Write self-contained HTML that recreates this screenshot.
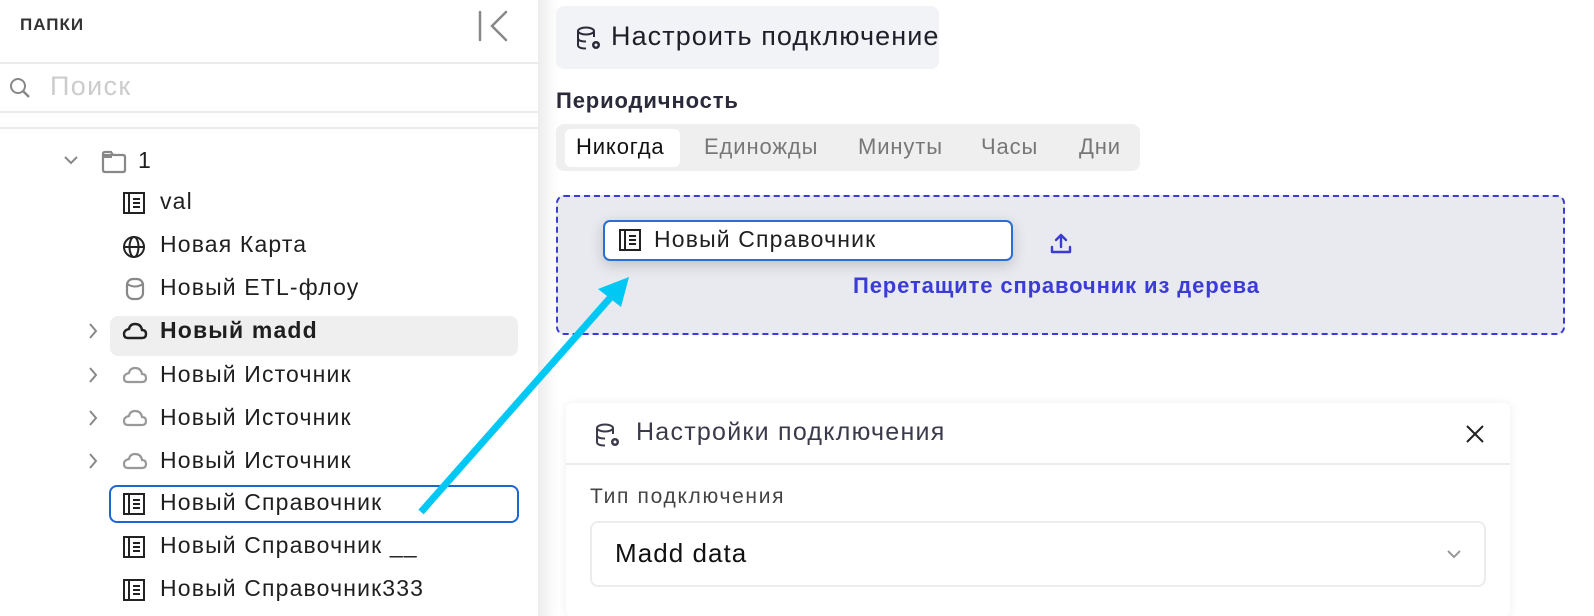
<!DOCTYPE html>
<html><head><meta charset="utf-8"><style>
*{box-sizing:border-box;margin:0;padding:0}
body{width:1594px;height:616px;overflow:hidden;background:#fff;font-family:"Liberation Sans","Noto Sans CJK SC",sans-serif;position:relative;color:#1f1f1f}
.a{position:absolute;white-space:nowrap;letter-spacing:.05em}
.row{position:absolute;left:160px;font-size:23px;line-height:26px;color:#1f1f1f;white-space:nowrap;letter-spacing:.05em}
svg{position:absolute;overflow:visible}
</style></head><body>
<div class="a" style="left:538px;top:0;width:22px;height:616px;background:linear-gradient(90deg,#ececec,#fafafa 60%,#fff)"></div>
<div class="a" style="left:20px;top:15px;font-size:17px;font-weight:bold;color:#333;letter-spacing:1px">ПАПКИ</div>
<svg style="left:478px;top:10px" width="32" height="32"><path d="M2 2V30M28 2L14 16L28 30" stroke="#888" stroke-width="2.5" fill="none" stroke-linecap="round"/></svg>
<div class="a" style="left:0;top:62px;width:538px;height:2px;background:#ebebeb"></div>
<svg style="left:8px;top:76px" width="24" height="24"><circle cx="10" cy="10" r="7" stroke="#888" stroke-width="2" fill="none"/><path d="M15 15L21 21" stroke="#888" stroke-width="2.5"/></svg>
<div class="a" style="left:50px;top:71px;font-size:27px;color:#ccc">Поиск</div>
<div class="a" style="left:0;top:111px;width:538px;height:2px;background:#ebebeb"></div>
<div class="a" style="left:0;top:127px;width:538px;height:2px;background:#ebebeb"></div>
<svg style="left:63px;top:155px" width="16" height="10"><path d="M2 2L8 8L14 2" stroke="#888" stroke-width="2" fill="none"/></svg>
<svg style="left:101px;top:150px" width="26" height="24"><path d="M2 4Q2 2 4 2H10L12 5H22Q24 5 24 7V20Q24 22 22 22H4Q2 22 2 20Z" stroke="#888" stroke-width="2.2" fill="none"/><path d="M2 4H11V8H2Z" fill="#888"/></svg>
<div class="row" style="left:138px;top:147px">1</div>
<svg style="left:123px;top:192px" width="22" height="22"><rect x="1" y="1" width="20" height="20" stroke="#222" stroke-width="2" fill="none"/><path d="M6 1V21M10 7H17M10 11H17M10 15H17" stroke="#222" stroke-width="2"/></svg>
<div class="row" style="top:188px">val</div>
<svg style="left:122px;top:235px" width="24" height="24"><circle cx="12" cy="12" r="10" stroke="#222" stroke-width="2" fill="none"/><ellipse cx="12" cy="12" rx="4.5" ry="10" stroke="#222" stroke-width="2" fill="none"/><path d="M2 12H22" stroke="#222" stroke-width="2"/></svg>
<div class="row" style="top:231px">Новая Карта</div>
<svg style="left:125px;top:277px" width="20" height="24"><rect x="2" y="2" width="16" height="20" rx="6" stroke="#888" stroke-width="2.2" fill="none"/><path d="M2 7Q10 12 18 7" stroke="#888" stroke-width="2" fill="none"/></svg>
<div class="row" style="top:274px">Новый ETL-флоу</div>
<div class="a" style="left:110px;top:316px;width:408px;height:40px;background:#efefef;border-radius:8px"></div>
<svg style="left:87px;top:322px" width="12" height="18"><path d="M3 2L9 9L3 16" stroke="#888" stroke-width="2" fill="none"/></svg>
<svg style="left:123px;top:322px" width="24" height="18"><path d="M5 16H19Q23 16 23 12Q23 8 19 8Q18 2 12 2Q7 2 6 7Q1 8 1 12Q1 16 5 16Z" stroke="#222" stroke-width="2.4" fill="none"/></svg>
<div class="row" style="top:317px;font-weight:bold">Новый madd</div>
<svg style="left:87px;top:366px" width="12" height="18"><path d="M3 2L9 9L3 16" stroke="#888" stroke-width="2" fill="none"/></svg>
<svg style="left:123px;top:366px" width="24" height="18"><path d="M5 16H19Q23 16 23 12Q23 8 19 8Q18 2 12 2Q7 2 6 7Q1 8 1 12Q1 16 5 16Z" stroke="#999" stroke-width="2.2" fill="none"/></svg>
<div class="row" style="top:361px">Новый Источник</div>
<svg style="left:87px;top:409px" width="12" height="18"><path d="M3 2L9 9L3 16" stroke="#888" stroke-width="2" fill="none"/></svg>
<svg style="left:123px;top:409px" width="24" height="18"><path d="M5 16H19Q23 16 23 12Q23 8 19 8Q18 2 12 2Q7 2 6 7Q1 8 1 12Q1 16 5 16Z" stroke="#999" stroke-width="2.2" fill="none"/></svg>
<div class="row" style="top:404px">Новый Источник</div>
<svg style="left:87px;top:452px" width="12" height="18"><path d="M3 2L9 9L3 16" stroke="#888" stroke-width="2" fill="none"/></svg>
<svg style="left:123px;top:452px" width="24" height="18"><path d="M5 16H19Q23 16 23 12Q23 8 19 8Q18 2 12 2Q7 2 6 7Q1 8 1 12Q1 16 5 16Z" stroke="#999" stroke-width="2.2" fill="none"/></svg>
<div class="row" style="top:447px">Новый Источник</div>
<div class="a" style="left:109px;top:485px;width:410px;height:38px;border:2px solid #1a66d2;border-radius:8px"></div>
<svg style="left:123px;top:493px" width="22" height="22"><rect x="1" y="1" width="20" height="20" stroke="#222" stroke-width="2" fill="none"/><path d="M6 1V21M10 7H17M10 11H17M10 15H17" stroke="#222" stroke-width="2"/></svg>
<div class="row" style="top:489px">Новый Справочник</div>
<svg style="left:123px;top:536px" width="22" height="22"><rect x="1" y="1" width="20" height="20" stroke="#222" stroke-width="2" fill="none"/><path d="M6 1V21M10 7H17M10 11H17M10 15H17" stroke="#222" stroke-width="2"/></svg>
<div class="row" style="top:532px">Новый Справочник __</div>
<svg style="left:123px;top:579px" width="22" height="22"><rect x="1" y="1" width="20" height="20" stroke="#222" stroke-width="2" fill="none"/><path d="M6 1V21M10 7H17M10 11H17M10 15H17" stroke="#222" stroke-width="2"/></svg>
<div class="row" style="top:575px">Новый Справочник333</div>

<!-- right -->
<div class="a" style="left:556px;top:6px;width:383px;height:63px;background:#f2f3f6;border-radius:8px"></div>
<svg style="left:576px;top:26px" width="28" height="26"><ellipse cx="10" cy="5" rx="8" ry="3.5" stroke="#2a2a3a" stroke-width="2" fill="none"/><path d="M2 5V19Q2 22.5 10 22.5M18 5V11M2 12Q2 15.5 10 15.5" stroke="#2a2a3a" stroke-width="2" fill="none"/><circle cx="20" cy="19" r="4" fill="#2a2a3a"/><circle cx="20" cy="19" r="1.5" fill="#f2f3f6"/></svg>
<div class="a" style="left:611px;top:21px;font-size:27px;color:#1f1f2a;letter-spacing:.04em">Настроить подключение</div>
<div class="a" style="left:556px;top:88px;font-size:22px;font-weight:bold;color:#2a2a3a;letter-spacing:.04em">Периодичность</div>
<div class="a" style="left:556px;top:124px;width:584px;height:47px;background:#efefef;border-radius:8px"></div>
<div class="a" style="left:565px;top:129px;width:115px;height:38px;background:#fff;border-radius:6px"></div>
<div class="a" style="left:576px;top:134px;font-size:22px;color:#111;letter-spacing:.04em">Никогда</div>
<div class="a" style="left:704px;top:134px;font-size:22px;color:#777;letter-spacing:.04em">Единожды</div>
<div class="a" style="left:858px;top:134px;font-size:22px;color:#777;letter-spacing:.04em">Минуты</div>
<div class="a" style="left:981px;top:134px;font-size:22px;color:#777;letter-spacing:.04em">Часы</div>
<div class="a" style="left:1079px;top:134px;font-size:22px;color:#777;letter-spacing:.04em">Дни</div>
<div class="a" style="left:556px;top:195px;width:1009px;height:140px;background:#e8eaef;border:2px dashed #3b3bd6;border-radius:8px"></div>
<div class="a" style="left:603px;top:220px;width:410px;height:41px;background:#fff;border:2px solid #2a6fd6;border-radius:7px;box-shadow:0 4px 14px rgba(0,0,0,.18)"></div>
<svg style="left:619px;top:229px" width="22" height="22"><rect x="1" y="1" width="20" height="20" stroke="#222" stroke-width="2" fill="none"/><path d="M6 1V21M10 7H17M10 11H17M10 15H17" stroke="#222" stroke-width="2"/></svg>
<div class="a" style="left:654px;top:226px;font-size:23px;color:#1f1f1f">Новый Справочник</div>
<svg style="left:1050px;top:232px" width="22" height="22"><path d="M11 3V15M6 8L11 3L16 8M2 15V20H20V15" stroke="#3b3bd6" stroke-width="2.4" fill="none" stroke-linecap="round" stroke-linejoin="round"/></svg>
<div class="a" style="left:853px;top:273px;font-size:22px;font-weight:bold;color:#3b3bd6;letter-spacing:.04em">Перетащите справочник из дерева</div>

<div class="a" style="left:566px;top:403px;width:944px;height:213px;background:#fff;border-radius:6px;box-shadow:0 0 10px rgba(0,0,0,.07)"></div>
<div class="a" style="left:566px;top:463px;width:944px;height:2px;background:#ececec"></div>
<svg style="left:595px;top:423px" width="28" height="26"><ellipse cx="10" cy="5" rx="8" ry="3.5" stroke="#3a3a4a" stroke-width="2" fill="none"/><path d="M2 5V19Q2 22.5 10 22.5M18 5V11M2 12Q2 15.5 10 15.5" stroke="#3a3a4a" stroke-width="2" fill="none"/><circle cx="20" cy="19" r="4" fill="#3a3a4a"/><circle cx="20" cy="19" r="1.5" fill="#fff"/></svg>
<div class="a" style="left:636px;top:418px;font-size:25px;color:#3a3a4a">Настройки подключения</div>
<svg style="left:1465px;top:424px" width="20" height="20"><path d="M2 2L18 18M18 2L2 18" stroke="#222" stroke-width="2"/></svg>
<div class="a" style="left:590px;top:485px;font-size:21px;color:#444;letter-spacing:.08em">Тип подключения</div>
<div class="a" style="left:590px;top:521px;width:896px;height:66px;border:2px solid #ececec;border-radius:8px"></div>
<div class="a" style="left:615px;top:538px;font-size:26px;color:#111;letter-spacing:.04em">Madd data</div>
<svg style="left:1446px;top:549px" width="16" height="10"><path d="M2 2L8 8L14 2" stroke="#999" stroke-width="2" fill="none"/></svg>

<svg style="left:0;top:0" width="1594" height="616"><path d="M421 512L610 298" stroke="#00c8f5" stroke-width="7" stroke-linecap="butt"/><path d="M629 277L598 289L621 307Z" fill="#00c8f5"/></svg>
</body></html>
